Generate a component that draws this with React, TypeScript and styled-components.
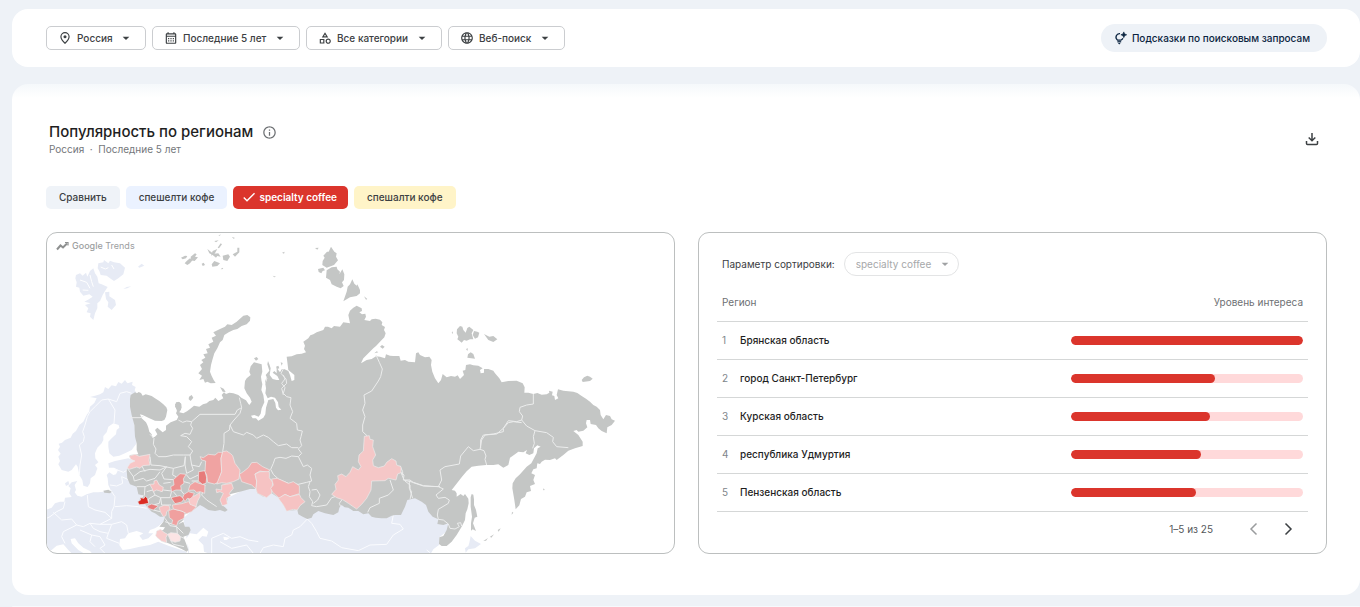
import React from 'react';
import styled, { createGlobalStyle } from 'styled-components';
import {
  MdOutlineCalendarMonth, MdOutlineCategory, MdLanguage,
  MdArrowDropDown, MdCheck, MdOutlineInfo,
} from 'react-icons/md';

const GlobalStyle = createGlobalStyle`
  * { box-sizing: border-box; }
  body { margin: 0; background: #eef2f7; color: #1f1f1f; }
  body, button, select { font-family: Inter, "Liberation Sans", sans-serif; }
`;

const Page = styled.main`
  display: flex;
  flex-direction: column;
  min-height: 100vh;
  padding: 9px 0 0 12px;
`;

const Card = styled.section`
  background: #fff;
  border-radius: 16px;
`;

const Toolbar = styled(Card)`
  display: flex;
  align-items: center;
  gap: 6px;
  padding: 15px 33px 15px 34px;
`;

const RegionCard = styled(Card)`
  margin-top: 17px;
  padding: 38px 33px 41px 34px;
  background: linear-gradient(#f5f8fb, #fff 14px);
`;

const NextCard = styled(Card)`
  flex: 1;
  margin-top: 11px;
  min-height: 1px;
  border-radius: 16px 16px 0 0;
  background: #f7f9fc;
`;

const Filter = styled.label`
  display: flex;
  align-items: center;
  height: 24px;
  padding: 0 11px;
  border: 1px solid #cbcdd0;
  border-radius: 5px;
  color: #3c4043;
  svg { width: 14px; height: 14px; flex: none; }
  svg:last-child { width: 16px; height: 16px; margin-left: 5px; }
`;

const PlainSelect = styled.select<{ $muted?: boolean }>`
  appearance: none;
  margin: 0;
  padding: 0;
  border: 0;
  background: none;
  color: ${p => (p.$muted ? '#a6a8aa' : '#3c4043')};
  font-size: 10px;
  font-weight: ${p => (p.$muted ? 400 : 500)};
  line-height: 16px;
  opacity: 1;
  ${Filter} & { margin-left: 5px; }
`;

const HintButton = styled.button`
  display: flex;
  align-items: center;
  gap: 5px;
  height: 28px;
  margin-left: auto;
  padding: 0 17px 0 12px;
  border: 0;
  border-radius: 14px;
  background: #eef2f7;
  color: #0b2440;
  font-size: 10px;
  font-weight: 500;
`;

const CardHeader = styled.header`
  display: flex;
  align-items: center;
  justify-content: space-between;
  padding: 0 8px 0 3px;
`;

const TitleRow = styled.div`
  display: flex;
  align-items: center;
  gap: 9px;
`;

const Title = styled.h2`
  margin: 0;
  font-size: 15px;
  line-height: 20px;
  font-weight: 500;
`;

const Subtitle = styled.p`
  margin: 0;
  color: #74777b;
  font-size: 10px;
  line-height: 14px;
`;

const IconButton = styled.button`
  display: flex;
  padding: 0;
  border: 0;
  background: none;
  color: #3c4043;
  &:disabled { color: #9a9c9e; }
`;

const Chips = styled.div`
  display: flex;
  gap: 6px;
  margin: 30px 0 23px;
`;

const Chip = styled.button<{ $bg: string; $selected?: boolean }>`
  display: flex;
  align-items: center;
  gap: 2px;
  height: 23px;
  padding: ${p => (p.$selected ? '0 11px 1px 8px' : '0 13px 1px')};
  border: 0;
  border-radius: 5px;
  background: ${p => p.$bg};
  color: ${p => (p.$selected ? '#fff' : '#3c4043')};
  font-size: 10px;
  font-weight: ${p => (p.$selected ? 600 : 500)};
`;

const Panels = styled.div`
  display: grid;
  grid-template-columns: 1fr 1fr;
  gap: 23px;
`;

const Panel = styled.section`
  overflow: hidden;
  border: 1px solid #bcbfbf;
  border-radius: 11px;
`;

const MapPanel = styled(Panel)`
  position: relative;
`;

const MapSvg = styled.svg`
  display: block;
  width: 100%;
`;

const Brand = styled.div`
  position: absolute;
  top: 6px;
  left: 9px;
  display: flex;
  align-items: center;
  gap: 3px;
  color: #9c9e9f;
  font-size: 9px;
  line-height: 14px;
  b { font-weight: 500; }
`;

const TablePanel = styled(Panel)`
  padding: 19px 18px 0;
`;

const SortRow = styled.label`
  display: flex;
  align-items: center;
  gap: 9px;
  padding-left: 5px;
  color: #3c4043;
  font-size: 10px;
`;

const SortPill = styled.span`
  display: flex;
  align-items: center;
  gap: 5px;
  height: 24px;
  padding: 0 5px 0 11px;
  border: 1px solid #e3e4e5;
  border-radius: 12px;
  color: #a0a2a4;
`;

const Table = styled.table`
  width: 100%;
  margin-top: 7px;
  border-collapse: collapse;
  font-size: 10px;
  th, td { padding: 0 5px; border-bottom: 1px solid #d5d7d7; text-align: left; }
  th { height: 38px; color: #6d7073; font-weight: 400; }
  td { height: 38px; }
  th:last-child { text-align: right; }
`;

const NumberCell = styled.td`
  width: 23px;
  color: #80868b;
`;

const NameCell = styled.td`
  && { padding-left: 0; }
  font-weight: 500;
`;

const BarCell = styled.td`
  width: 41%;
`;

const Track = styled.div`
  height: 9px;
  overflow: hidden;
  border-radius: 5px;
  background: #ffd9da;
`;

const Fill = styled.div`
  height: 100%;
  border-radius: 5px;
  background: #db352c;
`;

const Pager = styled.nav`
  display: flex;
  align-items: center;
  justify-content: flex-end;
  gap: 20px;
  height: 34px;
  padding-right: 13px;
  color: #55585b;
  font-size: 10px;
  span { margin-right: 14px; }
`;

// Each map sheet has its own origin; points are shifted into the shared map space.
const sheet = (ox: number, oy: number) => (pts: string) =>
  pts.trim().split(/\s+/).map(p => {
    const [x, y] = p.split(',').map(Number);
    return `${x + ox},${y + oy}`;
  }).join(' ');

const arctic = sheet(120, 675);
const west = sheet(120, 1125);
const taymyr = sheet(540, 675);
const siberia = sheet(660, 1125);
const northEast = sheet(1080, 900);
const farEast = sheet(1200, 1260);

const mainland = [
  west('270,95 270,72 272,60 285,52 291,55 296,51 303,54 308,62 317,58 325,60 335,63 345,70 358,78 370,88 379,97 382,105 378,125 373,135 365,138 345,137 325,128 308,120 300,118 305,130 318,142 322,150 325,158 328,170 335,178 337,188 345,185 352,178 345,165 352,158 360,165 368,172 378,165 378,152 392,142 410,135 415,125 408,115 412,105 405,95 408,82 418,81 424,87 425,98 418,112 430,115 441,109 450,102 462,92 478,95 489,88 500,85 508,78 520,75 526,68 535,78 550,70 545,60 552,52 558,57 568,53 580,55 595,60 604,68 618,76 625,86'),
  siberia('88,90 95,80 90,68 80,55 73,40 75,18'),
  taymyr('195,468 200,460 212,450 208,440 212,424 222,412 245,418 247,440 243,455 245,470 243,510'),
  siberia('123,10 127,28 124,45 130,60 133,82 125,100 122,116 116,125 103,120 93,122 98,130 108,130 115,137 130,128 136,118 138,98 145,75 160,72 166,84 168,98 174,106 184,104 176,96 174,82 165,68 153,65 143,70 136,55 138,40 135,20 142,0'),
  taymyr('255,480 262,460 257,450 268,437 262,418 264,408 268,418 272,430 269,450 278,462 290,465 298,465 292,453 278,443 283,438 290,445 290,428 300,442 305,433 312,432 325,438 330,450 335,468 343,465 343,450 325,435 320,395 335,394 350,388 365,386 378,382 372,372 375,362 370,350 385,340 391,331 400,328 410,322 430,315 435,305 444,305 455,310 462,303 480,305 490,292 510,295 505,270 510,257 520,248 530,242 545,250 546,258 538,262 546,268 556,266 558,275 553,285 570,288 575,283 587,281 600,284 607,292 605,300 615,306 612,315 617,325 613,337 600,350 588,363 580,370 565,385 550,400 543,415 560,405 575,402 588,394 600,395'),
  northEast('75,175 78,163 90,167 100,168 118,168 122,182 135,180 145,185 165,187 168,160 175,157 180,165 195,172 208,170 215,180 213,195 217,215 225,235 235,250 243,240 248,222 260,232 273,228 285,230 293,226 300,237 312,225 308,212 316,210 318,195 330,193 340,196 355,197 368,205 360,210 362,220 372,218 372,207 385,207 400,212 405,220 418,235 425,247 445,243 470,242 488,250 494,262 493,278 505,278 520,282 532,279 545,284 560,283 568,278 567,272 578,275 576,286 583,288 585,300 595,295 590,285 594,268 610,272 640,275 652,279 665,288 678,296 690,305 700,315 710,320 720,330 722,345 730,358 738,345 750,348 755,358 765,362 755,375 742,382 740,400 725,393 715,385 708,375 692,372 690,360 680,360 678,370 682,382 670,392 655,395 650,390 640,393 655,405 668,425 668,438'),
  farEast('525,85 505,92 490,105 470,120 465,115 450,120 435,119 425,125 420,132 412,130 410,145 400,148 394,160 405,165 400,180 405,192 390,198 393,213 380,217 375,230 363,237 358,256 347,268 343,240 337,205 338,190 347,175 360,163 380,140 394,130 402,115 410,100 413,85 422,80 412,76 402,85 400,100 388,105 377,100 381,90 370,97 355,95 345,103 330,113 325,135 310,143 295,133 280,135 258,135 235,137 215,140 200,154 186,170 172,188 155,210 165,212 170,220 170,230 182,222 190,228 195,222 205,236 206,250 202,268 197,280 195,300 185,320 170,345 155,365 140,378 125,378 117,372 118,352 130,348 140,330 145,310 130,315 112,312 115,298 98,290 85,275 78,255 65,245 45,235 22,240 15,260 3,285'),
  siberia('525,420 515,422 500,430 485,430 467,428 455,425 445,415 430,418 415,408 400,408 385,398 374,397 365,390 358,398 355,412 340,420 315,415 295,408 280,418 275,428 262,432 248,425 235,418 232,405 200,407 190,390 178,370 155,355 130,365 112,355 108,342 90,342 60,350 35,356'),
  west('565,360 560,385 545,390 555,397 563,405 555,410 540,405 525,408 505,405 490,395 480,390 460,405 432,420 430,435 415,448 430,440 435,455 448,455 452,465 445,480 430,485 438,505 445,525 440,530 425,522 410,515 385,505 370,500 350,485 352,470 370,464 375,457 358,455 370,440 375,425 360,425 345,415 335,410 325,400 315,388 295,385 300,372 312,362 295,358 290,335 270,328 262,310 260,285 268,270 285,258 268,245 270,240 295,238 290,225 290,205 285,185 283,150 275,120'),
].join(' ');

const foreign = [
  west('290,55 284,46 287,36 276,30 278,20 262,25 255,15 245,26 235,21 228,34 215,31 205,42 195,36 190,52 180,58 165,62 150,66 170,70 163,84 150,95 147,110 140,120 130,140 118,150 108,168 98,176 92,188 75,195 66,203 56,206 60,215 54,225 62,236 55,245 60,258 55,268 65,285 85,290 95,285 108,268 113,275 118,300 127,315 130,332 143,336 150,325 152,310 165,300 172,280 165,270 175,262 166,250 165,235 172,218 185,205 190,195 190,183 200,172 205,155 220,145 236,150 238,158 230,165 228,178 215,190 205,200 205,215 208,235 220,245 238,242 255,235 275,225 290,205 283,150 270,75'),
  west('20,404 35,398 45,385 60,380 73,380 75,368 95,366 88,355 92,340 85,333 95,322 112,318 104,330 108,345 104,352 112,362 125,365 140,358 160,352 175,352 190,350 210,355 212,345 205,330 203,310 200,300 208,292 220,300 228,298 234,285 222,278 207,278 205,265 225,258 265,250 290,260 310,380 380,430 356,453 345,460 330,465 325,475 340,475 325,490 308,495 298,482 310,475 290,468 265,475 255,490 240,492 238,510 248,525 270,522 300,515 330,510 355,500 385,512 440,530 440,540 160,540 150,528 130,518 115,505 105,490 92,492 95,505 115,525 140,540 100,540 85,525 70,508 50,512 35,525 20,525'),
  [west('445,540 440,490 430,430 480,385 540,380 640,330'), siberia('260,400 400,385 560,360 620,360'), farEast('115,290 150,310 145,330 118,352 117,375 100,388 90,405')].join(' '),
  arctic('175,115 190,112 192,105 205,115 210,107 222,112 240,115 255,128 250,148 235,160 222,168 210,160 200,152 182,150 178,138 173,130'),
  arctic('108,150 120,145 128,152 138,143 142,155 150,138 160,130 165,145 172,155 176,175 185,178 203,186 195,198 188,210 180,228 172,235 172,250 165,265 160,285 150,275 152,265 140,262 145,250 135,240 152,235 133,230 148,222 158,215 148,208 130,212 120,200 118,188 108,185 110,172 106,160'),
  arctic('195,202 208,200 208,214 225,225 228,240 215,255 203,245 205,232 198,222'),
  arctic('294,125 305,116 313,122 298,128'),
  arctic('250,192 260,186 274,184 262,190'),
  farEast('212,348 225,362 243,372 225,385 205,388 197,398 195,385 205,378 208,368'),
  west('75,325 85,318 88,328 78,333'),
];

const seas = [
  west('450,475 470,478 490,458 505,470 500,485 487,483 475,495 490,510 492,530 505,535 510,540 448,540 445,515 436,495'),
  west('550,485 570,488 560,495 552,495'),
];

// Fjords cut into the northern islands.
const fjords = [
  arctic('120,165 140,172 150,190'),
  arctic('150,150 155,170 160,185'),
  arctic('182,126 196,132 205,128'),
  arctic('215,120 222,132'),
  arctic('128,195 145,196'),
];

const foreignBorders = [
  west('118,300 120,270 125,240 118,210 130,200 133,185 128,170 135,150 142,125 150,110 165,95 185,75 205,72'),
  west('205,72 225,105 222,145'),
  west('205,72 230,80 240,55 260,50 275,55'),
  west('210,330 230,333 248,325 245,305 268,315'),
  west('225,282 250,292 262,285'),
  west('212,345 225,365 222,395 215,410 215,430'),
  west('142,360 145,395 165,405 195,412 215,430 180,448 150,445 130,455 110,450 90,460 70,470 65,485 75,505'),
  west('225,395 260,392 295,395 320,400'),
  west('75,380 70,400 50,410 30,425 20,430'),
  west('40,412 65,435 95,432 110,450'),
  west('150,445 160,460 180,470 205,475 215,448 245,440 260,450 265,475'),
  west('180,448 215,448'),
  west('205,475 200,490 238,505'),
  west('120,465 155,480 180,485 195,510 180,520 200,540'),
  west('155,480 150,500 165,515'),
  west('515,540 515,490 550,475 575,490 600,485 625,495 655,500'),
  siberia('120,535 130,518 160,510 190,515 195,490 215,480 220,465 240,455 262,432'),
  siberia('0,500 35,520 80,510 100,535'),
  siberia('262,432 275,445 290,470 300,490 335,498 365,518 415,527 450,510 500,508 520,480 550,462 540,448 515,445 520,420'),
  farEast('80,390 90,398'),
];

const islands = [
  arctic('610,272 622,270 631,277 630,287 620,298 605,303 592,312 580,315 566,322 553,330 548,345 540,352 532,370 523,385 517,405 513,420 510,440 515,453 521,465 527,474 512,475 502,470 495,473 490,462 478,465 486,452 475,445 486,432 480,420 490,412 484,405 496,398 490,388 503,385 498,372 510,368 505,358 520,350 515,338 528,332 520,322 540,312 555,305 562,298 575,300 590,290'),
  arctic('540,486 551,491 557,501 548,500'),
  west('447,65 455,60 460,68 452,78 446,73'),
  west('405,88 415,80 423,86 423,105 412,112'),
  taymyr('222,400 230,396 235,402 228,407'),
  taymyr('453,65 463,80 470,85 468,95 474,106 462,120 440,128 427,120 428,108 434,98 430,92 441,80 446,80'),
  taymyr('440,136 455,127 470,125 472,133 480,140 478,148 487,133 493,148 492,165 486,172 491,183 482,190 470,185 455,178 450,165 438,158'),
  taymyr('414,132 430,128 435,136 428,138 424,145 416,141'),
  taymyr('517,163 523,176 530,182 532,178 540,195 540,205 530,213 510,217 490,229 500,200 503,185 510,178'),
  taymyr('3,98 15,92 22,93 18,100 8,103'), taymyr('20,108 30,100 38,105 30,115 22,120 14,115'),
  taymyr('32,95 45,85 50,88 45,95 54,97 44,108 33,106'), taymyr('65,116 71,113 75,120 68,123'),
  taymyr('82,72 100,86 115,85 122,95 112,93 108,98 98,90 88,85'), taymyr('98,78 112,72 104,86 93,92'),
  taymyr('95,118 103,108 120,115 112,123 97,125'), taymyr('128,92 145,88 150,95 142,108 130,105'),
  taymyr('158,88 172,80 172,68 178,68 178,82 165,95'), taymyr('103,48 116,46 108,52'),
  taymyr('115,32 122,28 120,32'), taymyr('155,36 164,38 162,42'), taymyr('122,133 127,128 130,132'),
  taymyr('113,68 122,55 126,58 117,70'), taymyr('405,69 416,68 412,74'), taymyr('306,83 314,80 312,86'),
  taymyr('278,152 288,155 283,157'), taymyr('600,365 606,360 614,365 608,371'), taymyr('583,385 590,379 595,382'),
  taymyr('552,214 562,222 558,224'), taymyr('288,425 295,422 298,430 291,432'), taymyr('302,412 308,414 305,422'),
  northEast('300,78 307,80 310,90 317,98 322,84 328,80 340,90 335,100 340,118 330,118 320,122 312,120 305,128 298,122 292,118 295,110 290,100 291,88'),
  northEast('342,93 352,95 358,98 354,112 345,116 338,105'),
  northEast('372,102 388,110 400,108 412,118 400,126 385,120'),
  northEast('324,163 332,157 340,162 345,176 322,173'), northEast('318,147 324,145 322,153'), northEast('275,98 279,94 278,102'),
  northEast('665,240 672,232 682,227 690,230 698,236 690,243 668,246'),
  farEast('212,232 215,222 220,224 222,238 222,255 228,270 232,290 224,293 219,310 228,333 218,328 213,332 213,310 216,290 212,260'),
  farEast('336,275 340,278 335,284'), farEast('429,205 435,210 430,211'), farEast('293,330 302,325 296,335'),
  farEast('270,350 282,343 274,353'), farEast('250,363 264,354 258,362'),
  west('190,347 205,344 215,350 210,355 193,353'),
];

const regions: [string, string][] = [
  ['#f8c6c6', west('268,243 285,238 298,244 330,238 327,255 330,270 308,272 300,280 290,276 268,283 262,278 270,265 285,258 272,253')],
  ['#db2b22', west('293,380 302,375 300,368 312,370 316,363 322,370 326,385 310,388 298,389')],
  ['#ea7f7d', west('322,392 335,387 355,393 340,405 325,400')],
  ['#f7c2c2', west('357,397 372,391 387,392 390,402 380,410 378,422 370,425 362,412')],
  ['#f0a09f', west('386,407 400,402 420,407 435,412 432,430 415,438 410,452 395,447 398,435 388,428')],
  ['#f3b2b1', west('397,390 425,386 445,380 455,388 470,395 455,410 440,416 425,408 400,402')],
  ['#f8caca', west('445,368 465,362 480,352 480,365 473,378 468,395 450,388')],
  ['#ea7f7d', west('393,368 405,365 420,362 432,372 425,381 405,386')],
  ['#ee8f8e', west('432,358 445,350 463,355 458,365 450,372 442,370 435,380 428,368')],
  ['#ed9190', west('400,314 420,296 438,298 430,312 432,325 422,332 424,345 408,345 395,350 392,335 402,330')],
  ['#f1a1a0', west('450,330 465,320 477,325 495,330 494,355 480,350 470,352 462,345 445,346')],
  ['#e77b7a', west('476,290 495,287 500,308 498,325 487,328 475,318')],
  ['#f0a3a2', west('480,245 490,248 505,238 525,240 535,232 548,232 543,250 545,290 535,322 523,327 503,322 500,300 495,290 497,258 485,255')],
  ['#f5bcbc', west('548,230 560,228 572,236 578,242 585,265 600,285 597,312 580,320 560,325 545,323 530,327 545,290 543,250')],
  ['#f7c0c0', west('528,342 545,345 545,330 575,325 580,340 568,355 572,362 560,370 562,388 547,392 540,375 550,355 540,350 530,353')],
  ['#f2b0b0', siberia('58,298 70,290 85,278 95,263 110,262 128,275 150,285 142,292 120,288 105,297 110,318 108,342 95,330 65,320')],
  ['#f6c3c3', siberia('105,297 120,290 148,290 148,308 158,322 155,355 140,368 112,355 108,342 110,318')],
  ['#f3b4b4', siberia('155,312 172,310 205,325 220,320 238,332 238,356 210,365 195,358 178,370 158,352 152,340 160,330')],
  ['#f6c3c3', siberia('175,370 195,358 210,365 238,358 243,368 255,380 240,392 232,405 220,403 200,409 190,390')],
  ['#f5c7c7', siberia('433,184 448,182 450,193 460,195 458,215 467,240 458,255 460,272 475,278 493,273 500,262 515,251 528,258 530,270 543,275 543,293 533,297 528,315 505,310 495,317 455,318 453,345 440,370 425,388 410,402 385,385 368,374 350,368 335,358 348,343 345,328 355,315 353,302 365,297 378,305 390,292 398,275 415,285 423,275 415,260 417,240 430,228')],
  ['#f6c0c0', west('329,328 342,327 342,318 350,315 358,330 370,337 367,350 350,345 340,350 336,340')],
  ['#f8cdcd', west('350,468 362,463 372,472 383,478 378,488 380,503 365,499 352,488 347,482')],
  ['#fbe4e4', west('383,478 392,473 412,475 422,485 420,498 405,502 392,497')],
];

const regionBorders = [
  west('270,128 300,128 310,124'),
  west('330,178 342,190 340,208 348,222 345,235 355,245 378,245 400,240 430,240 450,240 458,228 445,215 455,200 440,185 422,182 435,175 450,178 458,160 452,150 455,140 440,138 428,142 415,135'),
  west('455,140 480,118 585,118 592,105 605,98 602,85 598,68'),
  west('605,98 600,115 582,135 570,150 568,165 552,175 552,205 548,230'),
  siberia('30,150 40,170 70,180 80,172 100,180 110,190 130,180 145,187 160,200 175,212 200,207 215,218 235,218'),
  siberia('190,0 195,12 185,25 195,38 190,55 200,65 213,68 210,90 218,110 210,130 230,145 232,165 247,168 243,185 240,195 245,212 235,222 245,235 235,245 215,243 198,250 180,247 165,250 160,265 152,283 160,298 175,312 205,325 235,328 260,322 275,318 270,300 275,280 262,270 250,275 240,255 235,245'),
  taymyr('310,432 303,445 318,462 320,475 305,490 310,510'),
  siberia('270,320 265,335 270,350 268,365 278,380 275,392 290,395 320,390 335,368 345,365'), siberia('275,345 290,343 300,360 293,375 280,385'),
  siberia('366,374 358,385 362,395'),
  siberia('468,-60 478,-38 487,-18 482,5 475,18 455,48 432,60 435,85 428,105 435,125 428,150 428,170 442,183'),
  siberia('543,293 552,300 550,315 580,322 610,332 635,334 660,335'), siberia('555,318 570,330 570,345 578,370'),
  siberia('510,315 520,345 505,360 478,370 478,385 450,398 443,412'), siberia('540,272 548,290 548,300'),
  farEast('0,150 12,180 30,180 40,188 70,198 115,200 125,180 120,150 135,140 178,132 182,108 205,80 220,92 240,88 245,60 255,45 290,42 310,25 325,8 340,5 365,8'),
  northEast('520,282 520,312 500,315 480,322 478,335 488,348 485,360 470,365 445,362 430,385 430,395 400,402 370,405 362,420 362,445'),
  northEast('485,360 500,378 525,392 560,398 580,412 578,425 590,440 625,443'), northEast('525,392 520,410 523,430 518,445'),
  farEast('240,88 252,92 258,108 255,118 260,135'),
  farEast('115,200 130,207 108,225 115,235 135,232 148,240 145,250 115,268 112,285 115,298 130,300 145,312'),
  farEast('28,182 28,205 35,215 30,238'), farEast('145,312 150,325 165,327 178,320 172,310 182,308 185,318'),
  west('330,245 333,270 360,272 400,280 432,272 436,245'), west('280,305 300,290 330,283 360,285 380,275'),
  west('262,280 280,305 283,318 310,310 320,318 345,310 360,290'), west('290,335 315,335 330,328'), west('380,275 365,295 372,312 400,314'),
  west('400,280 398,300 408,305'), west('436,245 435,270 440,295'), west('450,240 455,270 478,275 485,260'), west('440,295 460,285 455,270'),
  west('315,335 313,362'), west('320,350 338,345 345,360 325,372 326,385'), west('345,360 362,368 358,385 340,390'),
  west('362,350 370,345 395,348 390,368 362,368'), west('370,325 392,322'), west('362,368 365,390 393,390'), west('432,320 450,325'), west('438,298 450,312 475,300'),
  west('455,318 478,318'), west('422,345 432,358'), west('495,330 485,360 500,375 530,395'),
  west('375,430 390,452 410,455 412,475'), west('410,455 430,475'), west('395,447 375,440'), west('392,497 400,508 432,515'), west('422,485 432,490'),
  west('340,405 360,410'), west('400,350 410,362'), west('305,272 315,290'),
];

const TrendsMap = () => (
  <MapSvg viewBox="141 699 1881 960" role="img" aria-label="Карта популярности по регионам">
    <g fill="#e7ebf5">{foreign.map((p, i) => <polygon key={i} points={p} />)}</g>
    <g fill="#fff">{seas.map((p, i) => <polygon key={i} points={p} />)}</g>
    <g fill="none" stroke="#fff" strokeWidth="3">{fjords.map((p, i) => <polyline key={i} points={p} />)}</g>
    <g fill="none" stroke="#fbfcff" strokeWidth="3">{foreignBorders.map((p, i) => <polyline key={i} points={p} />)}</g>
    <g fill="#c4c6c5">
      <polygon points={mainland} />
      {islands.map((p, i) => <polygon key={i} points={p} />)}
    </g>
    <g fill="none" stroke="#eceded" strokeWidth="3" strokeLinejoin="round">
      {regionBorders.map((p, i) => <polyline key={i} points={p} />)}
      {regions.map(([fill, p], i) => <polygon key={i} points={p} fill={fill} strokeWidth="2" />)}
    </g>
  </MapSvg>
);

const PinIcon = () => (
  <svg viewBox="0 0 24 24" fill="none" stroke="currentColor" strokeWidth="2">
    <path d="M12 21C7.500 17 5 13.500 5 9.900A7 7 0 0 1 19 9.900C19 13.500 16.500 17 12 21Z" />
    <circle cx="12" cy="10" r="2.600" fill="currentColor" stroke="none" />
  </svg>
);

const BulbIcon = () => (
  <svg width="14" height="14" viewBox="0 0 24 24" fill="none" stroke="currentColor" strokeWidth="2.200">
    <path d="M12 4.500A6.200 6.200 0 0 0 7.500 15.500H14A6.200 6.200 0 0 0 17 12.500" />
    <path d="M7.500 18.500H14" />
    <path d="M8.500 20.500H13L10.800 23Z" fill="currentColor" stroke="none" />
    <path d="M18.500 1.500L20 5L23.500 6.500L20 8L18.500 11.500L17 8L13.500 6.500L17 5Z" fill="currentColor" stroke="currentColor" strokeWidth="1" />
  </svg>
);

const DownloadIcon = () => (
  <svg width="14" height="14" viewBox="0 0 14 14" fill="none" stroke="currentColor" strokeWidth="1.500">
    <path d="M7 1V8.500M3.700 5.500L7 8.800L10.300 5.500M1.500 9V11.500Q1.500 12.500 2.500 12.500H11.500Q12.500 12.500 12.500 11.500V9" />
  </svg>
);

const TrendIcon = () => (
  <svg width="13" height="10" viewBox="0 0 13 10" fill="none" stroke="#8e9090" strokeWidth="2">
    <path d="M1 8.500L4.500 4.500L7 6.500L11 2.500" />
    <path d="M9 1.500H12V4.500" strokeWidth="1.200" />
  </svg>
);

const Chevron = ({ d }: { d: string }) => (
  <svg width="14" height="14" viewBox="0 0 14 14" fill="none" stroke="currentColor" strokeWidth="1.500"><path d={d} /></svg>
);

const filters = [
  { icon: <PinIcon />, text: 'Россия', label: 'Страна' },
  { icon: <MdOutlineCalendarMonth />, text: 'Последние 5 лет', label: 'Период' },
  { icon: <MdOutlineCategory />, text: 'Все категории', label: 'Категория' },
  { icon: <MdLanguage />, text: 'Веб-поиск', label: 'Тип поиска' },
];

const rows = [
  { name: 'Брянская область', value: 100 },
  { name: 'город Санкт-Петербург', value: 62 },
  { name: 'Курская область', value: 60 },
  { name: 'республика Удмуртия', value: 56 },
  { name: 'Пензенская область', value: 54 },
];

export default function App() {
  return (
    <>
      <GlobalStyle />
      <Page>
        <Toolbar>
          {filters.map(f => (
            <Filter key={f.text}>
              {f.icon}
              <PlainSelect aria-label={f.label}><option>{f.text}</option></PlainSelect>
              <MdArrowDropDown />
            </Filter>
          ))}
          <HintButton><BulbIcon />Подсказки по поисковым запросам</HintButton>
        </Toolbar>
        <RegionCard>
          <CardHeader>
            <div>
              <TitleRow>
                <Title>Популярность по регионам</Title>
                <IconButton aria-label="Справка"><MdOutlineInfo size={15} color="#6d7073" /></IconButton>
              </TitleRow>
              <Subtitle>Россия&nbsp; ·&nbsp; Последние 5 лет</Subtitle>
            </div>
            <IconButton aria-label="Скачать"><DownloadIcon /></IconButton>
          </CardHeader>
          <Chips>
            <Chip $bg="#eff3f8">Сравнить</Chip>
            <Chip $bg="#ebf2ff">спешелти кофе</Chip>
            <Chip $bg="#db352c" $selected><MdCheck size={16} stroke="currentColor" />specialty coffee</Chip>
            <Chip $bg="#fff4c8">спешалти кофе</Chip>
          </Chips>
          <Panels>
            <MapPanel>
              <TrendsMap />
              <Brand><TrendIcon /><span><b>Google</b> Trends</span></Brand>
            </MapPanel>
            <TablePanel>
              <SortRow>
                Параметр сортировки:
                <SortPill>
                  <PlainSelect $muted disabled><option>specialty coffee</option></PlainSelect>
                  <MdArrowDropDown size={16} />
                </SortPill>
              </SortRow>
              <Table>
                <thead>
                  <tr><th colSpan={2}>Регион</th><th>Уровень интереса</th></tr>
                </thead>
                <tbody>
                  {rows.map((r, i) => (
                    <tr key={r.name}>
                      <NumberCell>{i + 1}</NumberCell>
                      <NameCell>{r.name}</NameCell>
                      <BarCell><Track><Fill style={{ width: `${r.value}%` }} /></Track></BarCell>
                    </tr>
                  ))}
                </tbody>
              </Table>
              <Pager aria-label="Страницы">
                <span>1–5 из 25</span>
                <IconButton aria-label="Назад" disabled><Chevron d="M9.500 1.500L4 7L9.500 12.500" /></IconButton>
                <IconButton aria-label="Вперёд"><Chevron d="M4.500 1.500L10 7L4.500 12.500" /></IconButton>
              </Pager>
            </TablePanel>
          </Panels>
        </RegionCard>
        <NextCard />
      </Page>
    </>
  );
}
